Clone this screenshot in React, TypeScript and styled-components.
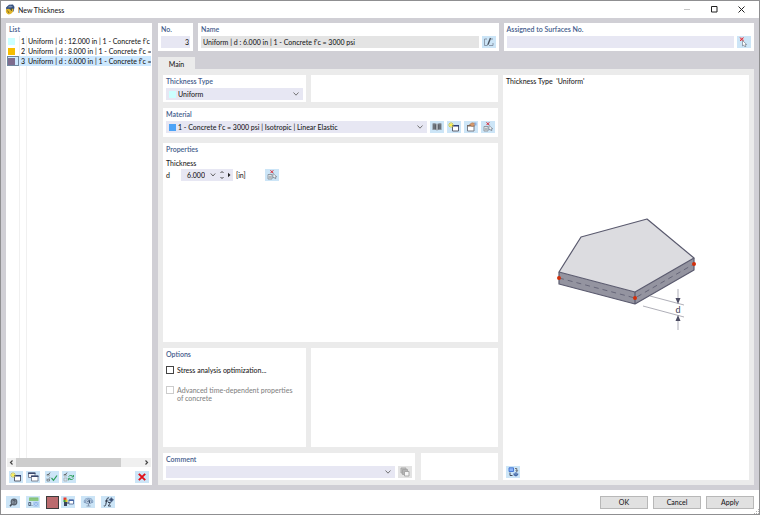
import React, { useState } from "react";
import styled, { createGlobalStyle, css } from "styled-components";

const ink = "#1c1c24";
const frame = "#d0cfd5";
const sheet = "#ebebeb";
const fieldBg = "#e7e7f3";
const toolBg = "#cce5f7";

const GlobalStyle = createGlobalStyle`
  *, *::before, *::after { box-sizing: border-box; }
  body {
    margin: 0;
    background: #fff;
    color: ${ink};
    font-family: Lato, "Open Sans", sans-serif;
    font-size: 7px;
    font-weight: 500;
    line-height: 8px;
  }
  button, input, select { font: inherit; color: inherit; margin: 0; border-radius: 0; }
  svg { display: block; flex: none; }
`;

const Window = styled.div`
  display: flex;
  flex-direction: column;
  min-height: 100vh;
  border: 1px solid #8f8f91;
  background: #fff;
`;

const TitleBar = styled.header`
  display: flex;
  align-items: center;
  height: 17px;
  padding: 0 4px;
  gap: 3px;
`;

const Title = styled.h1`
  flex: 1;
  margin: 0;
  font-size: 7px;
  font-weight: 500;
`;

const CaptionButton = styled.button`
  display: flex;
  align-items: center;
  justify-content: center;
  width: 27px;
  height: 16px;
  padding: 0;
  border: 0;
  background: none;
  &:disabled { opacity: 0.25; }
`;

const CaptionButtons = styled.div`
  display: flex;
`;

const Body = styled.main`
  display: grid;
  grid-template-columns: 146px minmax(0, 1fr);
  gap: 6px;
  flex: 1;
  padding: 5px;
  background: ${frame};
`;

const Panel = styled.section<{ $bottom?: number }>`
  display: flex;
  flex-direction: column;
  min-width: 0;
  padding: 0 3px ${(p) => p.$bottom ?? 2}px;
  background: #fff;
`;

const ListPanel = styled(Panel)`
  padding: 0 1px 2px;
`;

const labelText = css`
  display: block;
  height: 13px;
  margin: 0;
  color: #455d8c;
  font-size: 7px;
  font-weight: 600;
  line-height: 12px;
`;

const Heading = styled.h2`
  ${labelText}
`;

const ListHeading = styled(Heading)`
  padding-left: 2px;
`;

const FieldLabel = styled.label`
  ${labelText}
`;

const List = styled.ul`
  flex: 1;
  margin: 0;
  padding: 0;
  list-style: none;
  overflow: hidden;
  background: linear-gradient(#f0f0f0, #f0f0f0) 12px 0 / 1px 100% no-repeat,
    linear-gradient(#f0f0f0, #f0f0f0) 19px 0 / 1px 100% no-repeat;
`;

const ListRow = styled.li<{ $selected: boolean }>`
  display: grid;
  grid-template-columns: 12px 5px minmax(0, 1fr);
  align-items: center;
  height: 10px;
  column-gap: 1px;
  white-space: nowrap;
  cursor: default;
  background: ${(p) => (p.$selected ? "#cce8ff" : "transparent")};
`;

const SwatchCell = styled.span<{ $selected: boolean }>`
  display: flex;
  align-items: center;
  height: 10px;
  border: 1px solid ${(p) => (p.$selected ? "#7088a0" : "transparent")};
`;

const Swatch = styled.span<{ $color: string }>`
  width: 7px;
  height: 7px;
  background: ${(p) => p.$color};
`;

const RowNumber = styled.span`
  text-align: right;
`;

const RowName = styled.span`
  padding-left: 2px;
  overflow: hidden;
`;

const ScrollBar = styled.div`
  display: grid;
  grid-template-columns: 9px 1fr 9px;
  height: 9px;
  margin-bottom: 4px;
  background: #f0f0f0;
`;

const ScrollArrow = styled.button`
  display: flex;
  align-items: center;
  justify-content: center;
  padding: 0;
  border: 0;
  background: none;
`;

const ScrollThumb = styled.div`
  width: 83%;
  background: #cdcdcd;
`;

const ToolRow = styled.div`
  display: flex;
  gap: 2px;
  padding: 0 2px;
`;

const ToolButton = styled.button<{ $before?: number; $push?: boolean }>`
  display: flex;
  flex: none;
  align-items: center;
  justify-content: center;
  width: 14px;
  height: 12px;
  padding: 0;
  border: 0;
  margin-left: ${(p) => (p.$push ? "auto" : `${p.$before ?? 0}px`)};
  background: ${toolBg};
  &:disabled { background: #e3e3e3; }
`;

const ColorButton = styled(ToolButton)`
  width: 13px;
  height: 13px;
  border: 1px solid #3c3c3c;
  background: #bb6b6e;
`;

const Editor = styled.div`
  display: flex;
  flex-direction: column;
  min-width: 0;
`;

const TopRow = styled.div`
  display: grid;
  grid-template-columns: 35px minmax(0, 6fr) minmax(0, 5fr);
  gap: 5px;
  margin-bottom: 6px;
`;

const FieldRow = styled.div`
  display: flex;
  align-items: center;
  gap: 3px;
`;

const TextField = styled.input<{ $muted?: boolean; $end?: boolean }>`
  flex: 1;
  min-width: 0;
  height: 12px;
  padding: 0 ${(p) => (p.$end ? 1 : 2)}px 0 2px;
  border: 0;
  outline: 0;
  text-align: ${(p) => (p.$end ? "right" : "left")};
  background: ${(p) => (p.$muted ? "#e4e4e4" : fieldBg)};
`;

const Tabs = styled.div`
  display: flex;
`;

const Tab = styled.button`
  width: 37px;
  height: 12px;
  padding: 2px 0 0;
  border: 0;
  background: ${sheet};
`;

const Sheet = styled.div`
  display: grid;
  grid-template-columns: minmax(0, 335fr) minmax(0, 246fr);
  flex: 1;
  gap: 5px;
  padding: 6px 5px 5px;
  background: ${sheet};
`;

const Form = styled.div`
  display: flex;
  flex-direction: column;
  gap: 6px;
`;

const Halves = styled.div`
  display: grid;
  grid-template-columns: minmax(0, 143fr) minmax(0, 187fr);
  gap: 5px;
`;

const OptionHalves = styled(Halves)`
  min-height: 99px;
`;

const CommentRow = styled.div`
  display: grid;
  grid-template-columns: minmax(0, 252fr) minmax(0, 77fr);
  gap: 6px;
`;

const PropertiesPanel = styled(Panel)`
  flex: 1;
`;

const SelectBox = styled.div`
  display: grid;
  grid-template-columns: 11px minmax(0, 1fr) 11px;
  align-items: center;
  flex: 1;
  height: 12px;
  background: ${fieldBg};
  & > * { grid-row: 1; }
`;

const Select = styled.select`
  grid-column: 1 / -1;
  width: 100%;
  height: 12px;
  padding: 0 12px;
  border: 0;
  outline: 0;
  appearance: none;
  background: transparent;
`;

const SelectSwatch = styled(Swatch)`
  grid-column: 1;
  margin-left: 3px;
`;

const SelectArrow = styled.span`
  grid-column: 3;
  pointer-events: none;
`;

const SubHeading = styled.h3`
  margin: 3px 0 2px;
  font-size: 7px;
  font-weight: 500;
  line-height: 8px;
`;

const ValueRow = styled.div`
  display: flex;
  align-items: center;
`;

const Symbol = styled.label`
  width: 15px;
`;

const Spinner = styled.div`
  display: flex;
  align-items: center;
  gap: 4px;
  width: 52px;
  padding-right: 2px;
  background: ${fieldBg};
`;

const Unit = styled.span`
  width: 32px;
  padding-left: 3px;
`;

const CheckLabel = styled.label<{ $top: number; $off?: boolean }>`
  display: flex;
  gap: 3px;
  margin-top: ${(p) => p.$top}px;
  color: ${(p) => (p.$off ? "#858585" : ink)};
`;

const CheckBox = styled.input`
  flex: none;
  width: 8px;
  height: 8px;
  appearance: none;
  border: 1px solid #444;
  background: #fff;
  &:checked { background: #4a6fb0; }
  &:disabled { border-color: #ccc; }
`;

const PreviewTitle = styled.p`
  margin: 0;
  line-height: 12px;
  white-space: pre;
`;

const Drawing = styled.div`
  display: flex;
  flex: 1;
  align-items: center;
  justify-content: center;
`;

const Footer = styled.footer`
  display: flex;
  align-items: center;
  gap: 5px;
  height: 24px;
  padding: 0 5px;
`;

const FooterTools = styled.div`
  display: flex;
  align-items: center;
  gap: 2px;
  flex: 1;
`;

const DialogButton = styled.button`
  width: 48px;
  height: 13px;
  padding: 0;
  border: 1px solid #b8b8b8;
  background: #e1e1e1;
`;

const Grip = styled.div`
  display: flex;
  justify-content: flex-end;
  align-self: flex-end;
  width: 4px;
  margin: 0 -5px 0 -4px;
`;

const Chevron = () => (
  <svg width="8" height="6" viewBox="0 0 8 6" fill="none" stroke="#666" strokeWidth="0.9">
    <path d="M1.5 1.5 4 4.2 6.5 1.5" />
  </svg>
);

const AppIcon = () => (
  <svg width="10" height="11" viewBox="0 0 10 11">
    <path d="M1 3.5 4 .8 8 .6 9.500 3 8.600 7.500 5 8 1.500 7Z" fill="#35507f" />
    <path d="M2.500 3.200 5 1.600 8 2.400 6 3.600Z" fill="#7d93b5" />
    <path d="M1 5.500c2-1.600 4.300-.8 5 1 .8-2 2.200-2 2.500-1.400C8.400 8.800 6 10.600 3.500 10.400 1.500 10 .3 8 1 5.500Z" fill="#e0b62a" />
    <path d="M2.500 6.500 4 9M6.500 4v3" stroke="#6a5418" strokeWidth=".8" />
  </svg>
);

const NewIcon = () => (
  <svg width="12" height="10" viewBox="0 0 12 10">
    <path d="M4.500 3.500h6v5.500h-6z" fill="#fff" stroke="#5a6070" />
    <path d="M4 3h7v1.500H4z" fill="#2d3f78" />
    <path d="M3 0v6M0 3h6M1 1l4 4M5 1 1 5" stroke="#d6c52a" strokeWidth=".8" />
    <circle cx="3" cy="3" r="1.300" fill="#fff04a" />
  </svg>
);

const CopyIcon = () => (
  <svg width="12" height="10" viewBox="0 0 12 10">
    <path d="M1.500 1h6.500v4.500H1.500z" fill="#f2f4f8" stroke="#727a8c" strokeWidth=".9" />
    <path d="M1 .5h7.500v1.500H1z" fill="#39496f" />
    <path d="M4.500 4H11v5H4.500z" fill="#fff" stroke="#727a8c" strokeWidth=".9" />
    <path d="M4 3.500h7.500V5H4z" fill="#39496f" />
  </svg>
);

const CheckAllIcon = ({ swap }: { swap?: boolean }) => (
  <svg width="12" height="10" viewBox="0 0 12 10" fill="none">
    <path d="m1 2 1 1.200L4 .6" stroke="#444" strokeWidth=".8" />
    <path d="M1 2.500v1.500h2.500v-1.500" stroke="#999" strokeWidth=".6" />
    {swap ? (
      <path d="M1 6h3v3H1z" stroke="#aaa" strokeWidth=".7" />
    ) : (
      <path d="m1 6.500 1 1.300 2-2.600M1 7.200V9h2.500V7" stroke="#666" strokeWidth=".7" />
    )}
    {swap ? (
      <path d="M5.500 4.500c1.500-1.500 3.500-1.200 4.500 0M10.500 3v2H8.500M10.500 6.500C9 8 7 7.800 6 6.700M5.500 8.300v-2h2" stroke="#2a9d57" strokeWidth=".9" />
    ) : (
      <path d="m5.500 6 2 2.300L11 3.500" stroke="#2a9d57" strokeWidth="1.200" />
    )}
  </svg>
);

const DeleteIcon = () => (
  <svg width="8" height="8" viewBox="0 0 8 8" stroke="#e0101a" strokeWidth="1.900">
    <path d="m.8.8 6.400 6.400M7.200.8.8 7.200" />
  </svg>
);

const EditIcon = () => (
  <svg width="11" height="10" viewBox="0 0 11 10" fill="none">
    <path d="M4 2H1.500v6.500H4M6 8.500h4V6" stroke="#7a8798" strokeWidth=".8" />
    <path d="M7.500 1 5.200 7" stroke="#4a5462" strokeWidth="1.400" />
    <path d="m4.600 6.800-.3 2 1.500-1.500Z" fill="#333c4a" />
    <path d="M8 2h2" stroke="#7a8798" strokeWidth=".8" />
  </svg>
);

const PickIcon = () => (
  <svg width="9" height="10" viewBox="0 0 9 10">
    <path d="M1 .5h3.500V4H1z" fill="#f0a0a8" />
    <path d="m1 .5 3.500 3.500M4.500.5 1 4" stroke="#d0303c" strokeWidth=".9" />
    <path d="M3.500 3.500V9l1.300-1 1 1.800 1.200-.5-.9-1.800h1.600Z" fill="#fff" stroke="#77808c" strokeWidth=".7" />
  </svg>
);

const BookIcon = () => (
  <svg width="10" height="8" viewBox="0 0 10 8">
    <path d="M.5.5c2-.5 3.500-.3 4.500.5C6 .2 7.500 0 9.500.5v6.500C7.500 6.600 6 6.800 5 7.500 4 6.800 2.500 6.600.5 7Z" fill="#7c838c" />
    <path d="M5 1v6.500" stroke="#dde4ea" strokeWidth=".8" />
    <path d="M2 1.500v4.500M3.500 1.500v4.500M6.500 1.500v4.500M8 1.500v4.500" stroke="#444a52" strokeWidth=".6" />
  </svg>
);

const EditItemIcon = () => (
  <svg width="11" height="10" viewBox="0 0 11 10">
    <path d="M1.500 3.500h6.500V9H1.500z" fill="#fff" stroke="#777c88" />
    <path d="M1 3h7.500v1.500H1z" fill="#7a6a60" />
    <path d="M3.500 2.500 6 .8l3 .4L8.500 3.500 6 4.500Z" fill="#d79a6c" stroke="#a06c46" strokeWidth=".5" />
    <path d="M8.500.5h2v3h-2z" fill="#8fb0e0" />
  </svg>
);

const ClearPickIcon = () => (
  <svg width="11" height="10" viewBox="0 0 11 10">
    <path d="m3.500.3 2.800 2.800M6.300.3 3.500 3.100" stroke="#d8222e" strokeWidth="1" />
    <path d="M1 4.500h4V9H1z" fill="#eef2f5" stroke="#808890" strokeWidth=".8" />
    <path d="M2.200 6.200h1.600v1.600H2.200z" fill="none" stroke="#707880" strokeWidth=".5" />
    <path d="M6 3.500V8l1.100-.9.9 1.700 1-.5-.8-1.500h1.600Z" fill="#fff" stroke="#77808c" strokeWidth=".7" />
  </svg>
);

const PagesIcon = () => (
  <svg width="10" height="10" viewBox="0 0 10 10" stroke="#a4a4a4" strokeWidth=".9">
    <path d="M1 1h5v5H1z" fill="#c4c4c4" />
    <path d="M2.500 2.500h5v5h-5z" fill="#b4b4b4" />
    <path d="M4.500 4.500H9V9H4.500z" fill="#f6f6f6" />
  </svg>
);

const SwitchViewIcon = () => (
  <svg width="11" height="10" viewBox="0 0 11 10">
    <path d="M1 .8h4.500v3.700H1z" fill="#8db4f6" stroke="#3d70d0" strokeWidth=".9" />
    <path d="M2 5.500v3h2.500" fill="none" stroke="#444c5a" />
    <path d="M7 1.500h1.800v2.800M7.800 3.300l1 1.300 1-1.300" fill="none" stroke="#555" strokeWidth=".8" />
    <path d="M5.500 6.200 8 5.200l2.200 1V8L8 9.500 5.500 8.200Z" fill="#446aa8" />
    <path d="m5.500 6.200 2.500 1 2.200-1" fill="none" stroke="#c4d6ef" strokeWidth=".5" />
  </svg>
);

const HelpIcon = () => (
  <svg width="9" height="9" viewBox="0 0 9 9">
    <path d="M3.300 5.500 1 8.300" stroke="#444c57" strokeWidth="1.600" />
    <circle cx="5" cy="4" r="3.400" fill="#59626e" />
    <circle cx="5" cy="4" r="2.200" fill="#8b97a4" />
    <path d="M4 3.300c.2-1.400 2.200-1.200 2 0C5.800 4 5 4 5 4.700M5 5.300v.8" fill="none" stroke="#333b46" strokeWidth=".8" />
  </svg>
);

const UnitsIcon = () => (
  <svg width="11" height="10" viewBox="0 0 11 10">
    <path d="M1 .5h9.500V4H1z" fill="#8cc97f" />
    <path d="M3 .5v1M5 .5v1M7 .5v1M9 .5v1" stroke="#5b9c52" strokeWidth=".5" />
    <path d="M5.500 4.800h5v4.700h-5z" fill="#8fb6e8" />
    <path d="M.8 5.500h1.900v3H.8zM4 8.800v-.7" fill="none" stroke="#34445e" strokeWidth=".8" />
    <path d="m6 5.500 4 3.500M10 5.500 6 9" fill="none" stroke="#d8e8fa" strokeWidth=".6" />
  </svg>
);

const ColorTreeIcon = () => (
  <svg width="11" height="10" viewBox="0 0 11 10">
    <path d="M.5.500h3v2.500h-3z" fill="#e33b2e" />
    <path d="M.5 3h3v2h-3z" fill="#3a9b3e" />
    <path d="M2.500 2.500h2V5h-2z" fill="#e7c52a" />
    <path d="M1 5h3v4H1z" fill="#39435a" />
    <path d="M4 6h2" stroke="#39435a" />
    <path d="M6 3h4.500v4H6z" fill="#fff" stroke="#4a5f91" strokeWidth=".8" />
    <path d="M5.800 2.600h5V4h-5z" fill="#4466a8" />
  </svg>
);

const ViewIcon = () => (
  <svg width="11" height="10" viewBox="0 0 11 10" fill="none">
    <path d="M1.500 6C.5 3 2.500 1.300 5.500 1.300S10.500 3 9.500 6" stroke="#7f9cc0" strokeWidth="1" />
    <path d="M2.500 3.500 5.500 2l3 1.500v2.500l-3 1-3-1Z" fill="#b4c8de" stroke="#5e7aa0" strokeWidth=".5" />
    <path d="M4.500 4.500 6.500 3.500v2.500" stroke="#39506e" strokeWidth="1" />
    <path d="M5.500 6.500V9M3.500 9h4" stroke="#7a8ca4" strokeWidth=".8" />
  </svg>
);

const FunctionIcon = () => (
  <svg width="11" height="10" viewBox="0 0 11 10" fill="none">
    <path d="M6 1C4.500.3 4 1.500 3.700 3L2.800 7.500C2.500 9 1.700 9.300.8 8.800M2 4h3.500" stroke="#2c3648" strokeWidth="1" />
    <path d="M5 5.500h2.500L5.300 9H8" stroke="#2c3648" strokeWidth=".9" />
    <circle cx="8.300" cy="2.800" r="1.900" fill="#5d7499" />
    <path d="M8.300.3v5M5.800 2.800h5" stroke="#2f4568" strokeWidth=".7" />
  </svg>
);

const SlabDrawing = () => (
  <svg width="148" height="118" viewBox="0 0 148 118" role="img" aria-label="Uniform slab thickness">
    <path d="M7 54 83 74 142 40V52L83 86 7 66Z" fill="#9494a0" />
    <path d="M7 54 29 19 95 1 142 40 83 74Z" fill="#dcdce0" />
    <g fill="none" stroke="#5a5a6e" strokeWidth="1.200" strokeLinejoin="round">
      <path d="M7 54 29 19 95 1 142 40 83 74Z" />
      <path d="M7 54V66L83 86 142 52V40M83 74V86" />
    </g>
    <path d="M7 60 83 80 142 46" fill="none" stroke="#5a5a6e" strokeWidth=".8" strokeDasharray="5 4" />
    <g stroke="#9a9aa6" strokeWidth=".8">
      <path d="M98 78 132 87M91 88 132 99M126 71V82M126 101V112" />
    </g>
    <path d="m126 86-2.500-6h5ZM126 97l-2.500 6h5Z" fill="#4d4d63" />
    <text x="126" y="95" textAnchor="middle" fontSize="9" fill="#4d4d63">d</text>
    <g fill="#d22f0a">
      <circle cx="7" cy="60" r="2" />
      <circle cx="83" cy="80" r="2" />
      <circle cx="142" cy="46" r="2" />
    </g>
  </svg>
);

const thicknesses = [
  { no: 1, color: "#ccffff", name: "Uniform | d : 12.000 in | 1 - Concrete f'c = 3000 psi" },
  { no: 2, color: "#f5bd02", name: "Uniform | d : 8.000 in | 1 - Concrete f'c = 3000 psi" },
  { no: 3, color: "#7d6c8e", name: "Uniform | d : 6.000 in | 1 - Concrete f'c = 3000 psi" },
];

export default function App() {
  const [selected, setSelected] = useState(3);
  const current = thicknesses[selected - 1];

  return (
    <>
      <GlobalStyle />
      <Window>
        <TitleBar>
          <AppIcon />
          <Title>New Thickness</Title>
          <CaptionButtons>
            <CaptionButton aria-label="Minimize" disabled>
              <svg width="7" height="7" stroke="#222"><path d="M0 3.500h6" /></svg>
            </CaptionButton>
            <CaptionButton aria-label="Maximize">
              <svg width="7" height="7" fill="none" stroke="#222"><path d="M.5.5h5.500V6H.5z" /></svg>
            </CaptionButton>
            <CaptionButton aria-label="Close">
              <svg width="7" height="7" stroke="#222"><path d="m.5.5 6 6M6.500.5l-6 6" /></svg>
            </CaptionButton>
          </CaptionButtons>
        </TitleBar>

        <Body>
          <ListPanel>
            <ListHeading>List</ListHeading>
            <List role="listbox" aria-label="List">
              {thicknesses.map((t) => (
                <ListRow
                  key={t.no}
                  role="option"
                  aria-selected={t.no === selected}
                  $selected={t.no === selected}
                  onClick={() => setSelected(t.no)}
                >
                  <SwatchCell $selected={t.no === selected}>
                    <Swatch $color={t.color} />
                  </SwatchCell>
                  <RowNumber>{t.no}</RowNumber>
                  <RowName>{t.name}</RowName>
                </ListRow>
              ))}
            </List>
            <ScrollBar>
              <ScrollArrow aria-label="Scroll left">
                <svg width="5" height="7" fill="none" stroke="#444" strokeWidth="1.200"><path d="M3.500 1.500 1.500 3.500l2 2" /></svg>
              </ScrollArrow>
              <ScrollThumb />
              <ScrollArrow aria-label="Scroll right">
                <svg width="5" height="7" fill="none" stroke="#444" strokeWidth="1.200"><path d="m1.500 1.500 2 2-2 2" /></svg>
              </ScrollArrow>
            </ScrollBar>
            <ToolRow>
              <ToolButton aria-label="New"><NewIcon /></ToolButton>
              <ToolButton aria-label="Copy" $before={1}><CopyIcon /></ToolButton>
              <ToolButton aria-label="Select all" $before={3}><CheckAllIcon /></ToolButton>
              <ToolButton aria-label="Invert selection" $before={1}><CheckAllIcon swap /></ToolButton>
              <ToolButton aria-label="Delete" $push><DeleteIcon /></ToolButton>
            </ToolRow>
          </ListPanel>

          <Editor>
            <TopRow>
              <Panel $bottom={3}>
                <FieldLabel htmlFor="no">No.</FieldLabel>
                <FieldRow><TextField id="no" $end value={selected} readOnly /></FieldRow>
              </Panel>
              <Panel $bottom={3}>
                <FieldLabel htmlFor="name">Name</FieldLabel>
                <FieldRow>
                  <TextField id="name" $muted value={current.name} readOnly />
                  <ToolButton aria-label="Edit name"><EditIcon /></ToolButton>
                </FieldRow>
              </Panel>
              <Panel $bottom={3}>
                <FieldLabel htmlFor="assigned">Assigned to Surfaces No.</FieldLabel>
                <FieldRow>
                  <TextField id="assigned" defaultValue="" />
                  <ToolButton aria-label="Select surfaces"><PickIcon /></ToolButton>
                </FieldRow>
              </Panel>
            </TopRow>

            <Tabs role="tablist">
              <Tab role="tab" aria-selected="true">Main</Tab>
            </Tabs>

            <Sheet role="tabpanel">
              <Form>
                <Halves>
                  <Panel>
                    <FieldLabel htmlFor="type">Thickness Type</FieldLabel>
                    <SelectBox>
                      <SelectSwatch $color="#ccffff" />
                      <Select id="type"><option>Uniform</option></Select>
                      <SelectArrow><Chevron /></SelectArrow>
                    </SelectBox>
                  </Panel>
                  <Panel />
                </Halves>

                <Panel $bottom={4}>
                  <FieldLabel htmlFor="material">Material</FieldLabel>
                  <FieldRow>
                    <SelectBox>
                      <SelectSwatch $color="#4da3f7" />
                      <Select id="material">
                        <option>1 - Concrete f'c = 3000 psi | Isotropic | Linear Elastic</option>
                      </Select>
                      <SelectArrow><Chevron /></SelectArrow>
                    </SelectBox>
                    <ToolButton aria-label="Material library"><BookIcon /></ToolButton>
                    <ToolButton aria-label="New material"><NewIcon /></ToolButton>
                    <ToolButton aria-label="Edit material"><EditItemIcon /></ToolButton>
                    <ToolButton aria-label="Pick material"><ClearPickIcon /></ToolButton>
                  </FieldRow>
                </Panel>

                <PropertiesPanel>
                  <Heading>Properties</Heading>
                  <SubHeading>Thickness</SubHeading>
                  <ValueRow>
                    <Symbol htmlFor="depth">d</Symbol>
                    <Spinner>
                      <TextField id="depth" $end defaultValue="6.000" />
                      <svg width="6" height="6" fill="none" stroke="#555" strokeWidth=".9"><path d="M.8 1.500 3 4l2.200-2.500" /></svg>
                      <svg width="4" height="8" fill="none" stroke="#333" strokeWidth=".9"><path d="m.5 2 1.500-1.500L3.500 2M.5 6 2 7.500 3.500 6" /></svg>
                      <svg width="3" height="6" fill="#222"><path d="M0 .8 2.500 3 0 5.200Z" /></svg>
                    </Spinner>
                    <Unit>[in]</Unit>
                    <ToolButton aria-label="Pick thickness"><ClearPickIcon /></ToolButton>
                  </ValueRow>
                </PropertiesPanel>

                <OptionHalves>
                  <Panel>
                    <Heading>Options</Heading>
                    <CheckLabel $top={5}>
                      <CheckBox type="checkbox" />
                      Stress analysis optimization...
                    </CheckLabel>
                    <CheckLabel $top={12} $off>
                      <CheckBox type="checkbox" disabled />
                      <span>Advanced time-dependent properties<br />of concrete</span>
                    </CheckLabel>
                  </Panel>
                  <Panel />
                </OptionHalves>

                <CommentRow>
                  <Panel>
                    <FieldLabel htmlFor="comment">Comment</FieldLabel>
                    <FieldRow>
                      <SelectBox>
                        <Select id="comment"><option></option></Select>
                        <SelectArrow><Chevron /></SelectArrow>
                      </SelectBox>
                      <ToolButton aria-label="Comment library" disabled><PagesIcon /></ToolButton>
                    </FieldRow>
                  </Panel>
                  <Panel />
                </CommentRow>
              </Form>

              <Panel>
                <PreviewTitle>{"Thickness Type  'Uniform'"}</PreviewTitle>
                <Drawing><SlabDrawing /></Drawing>
                <ToolButton aria-label="Switch view"><SwitchViewIcon /></ToolButton>
              </Panel>
            </Sheet>
          </Editor>
        </Body>

        <Footer>
          <FooterTools>
            <ToolButton aria-label="Help"><HelpIcon /></ToolButton>
            <ToolButton aria-label="Units" $before={4}><UnitsIcon /></ToolButton>
            <ColorButton aria-label="Color" $before={4} />
            <ToolButton aria-label="Color settings"><ColorTreeIcon /></ToolButton>
            <ToolButton aria-label="View" $before={4}><ViewIcon /></ToolButton>
            <ToolButton aria-label="Functions" $before={4}><FunctionIcon /></ToolButton>
          </FooterTools>
          <DialogButton>OK</DialogButton>
          <DialogButton>Cancel</DialogButton>
          <DialogButton>Apply</DialogButton>
          <Grip>
            <svg width="5" height="5" fill="#b0b0b0"><path d="M4 0h1v1H4zM2 2h1v1H2zM4 2h1v1H4zM0 4h1v1H0zM2 4h1v1H2zM4 4h1v1H4z" /></svg>
          </Grip>
        </Footer>
      </Window>
    </>
  );
}
